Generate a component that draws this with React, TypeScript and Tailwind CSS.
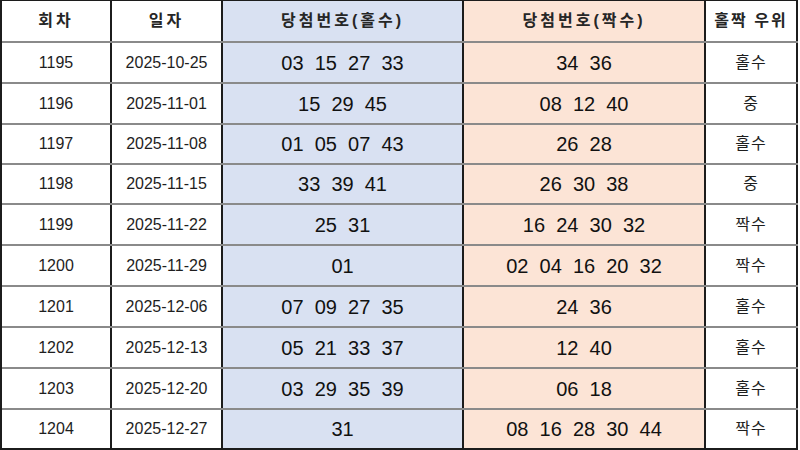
const rows = [
  { round: 1195, date: '2025-10-25', odd: ['03', '15', '27', '33'], even: ['34', '36'], lead: '홀수', h: 'h-[41px]' },
  { round: 1196, date: '2025-11-01', odd: ['15', '29', '45'], even: ['08', '12', '40'], lead: '중', h: 'h-[41px]' },
  { round: 1197, date: '2025-11-08', odd: ['01', '05', '07', '43'], even: ['26', '28'], lead: '홀수', h: 'h-[40px]' },
  { round: 1198, date: '2025-11-15', odd: ['33', '39', '41'], even: ['26', '30', '38'], lead: '중', h: 'h-[40px]' },
  { round: 1199, date: '2025-11-22', odd: ['25', '31'], even: ['16', '24', '30', '32'], lead: '짝수', h: 'h-[41px]' },
  { round: 1200, date: '2025-11-29', odd: ['01'], even: ['02', '04', '16', '20', '32'], lead: '짝수', h: 'h-[41px]' },
  { round: 1201, date: '2025-12-06', odd: ['07', '09', '27', '35'], even: ['24', '36'], lead: '홀수', h: 'h-[41px]' },
  { round: 1202, date: '2025-12-13', odd: ['05', '21', '33', '37'], even: ['12', '40'], lead: '홀수', h: 'h-[41px]' },
  { round: 1203, date: '2025-12-20', odd: ['03', '29', '35', '39'], even: ['06', '18'], lead: '홀수', h: 'h-[41px]' },
  { round: 1204, date: '2025-12-27', odd: ['31'], even: ['08', '16', '28', '30', '44'], lead: '짝수', h: 'h-[40px]' },
]

const font = "font-['Liberation_Sans','Noto_Sans_CJK_KR',sans-serif]"
const cell = 'flex items-center justify-center border-r-2 border-[#1c1c1c]'

export default function App() {
  return (
    <div className={`h-[450px] w-[800px] overflow-hidden bg-white text-[#1e1e1e] ${font}`}>
      <div className="w-[798px] border-l-2 border-t border-[#1c1c1c]">
        <div className="flex h-[42px] border-b-2 border-[#8a8a8a] text-[16px] font-bold tracking-[3px] text-[#262626]">
          <div className={`${cell} w-[110px]`}>회차</div>
          <div className={`${cell} w-[111px]`}>일자</div>
          <div className={`${cell} w-[241px] bg-[#d9e1f2]`}>당첨번호(홀수)</div>
          <div className={`${cell} w-[242px] bg-[#fce4d6]`}>당첨번호(짝수)</div>
          <div className={`${cell} w-[92px] tracking-[2px]`}>홀짝 우위</div>
        </div>
        {rows.map((row, i) => (
          <div
            key={row.round}
            className={`flex ${row.h} border-b-2 ${i === rows.length - 1 ? 'border-[#1c1c1c]' : 'border-[#8a8a8a]'}`}
          >
            <div className={`${cell} w-[110px] text-[16px]`}>{row.round}</div>
            <div className={`${cell} w-[111px] text-[16px]`}>{row.date}</div>
            <div className={`${cell} w-[241px] whitespace-pre bg-[#d9e1f2] text-[20px] text-[#111]`}>
              {row.odd.join('  ')}
            </div>
            <div className={`${cell} w-[242px] whitespace-pre bg-[#fce4d6] text-[20px] text-[#111]`}>
              {row.even.join('  ')}
            </div>
            <div className={`${cell} w-[92px] text-[16px] tracking-[1px]`}>{row.lead}</div>
          </div>
        ))}
      </div>
    </div>
  )
}
